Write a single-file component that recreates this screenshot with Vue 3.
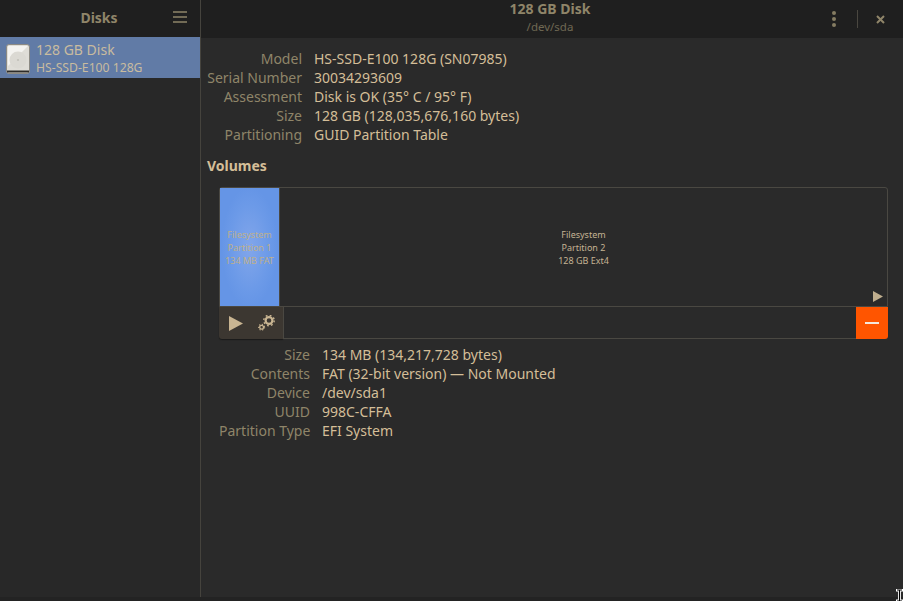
<script setup>
const diskRows = [
  ['Model', 'HS-SSD-E100 128G (SN07985)'],
  ['Serial Number', '30034293609'],
  ['Assessment', 'Disk is OK (35° C / 95° F)'],
  ['Size', '128 GB (128,035,676,160 bytes)'],
  ['Partitioning', 'GUID Partition Table'],
]
const volRows = [
  ['Size', '134 MB (134,217,728 bytes)'],
  ['Contents', 'FAT (32-bit version) — Not Mounted'],
  ['Device', '/dev/sda1'],
  ['UUID', '998C-CFFA'],
  ['Partition Type', 'EFI System'],
]
</script>

<template>
  <div class="win">
    <aside class="side">
      <header class="side-head">
        <span class="side-title">Disks</span>
        <svg class="menu" width="14" height="12" viewBox="0 0 14 12">
          <path d="M0 1h14M0 6h14M0 11h14" stroke="#8f8569" stroke-width="1.4" />
        </svg>
      </header>
      <div class="disk-row">
        <svg class="disk-icon" width="24" height="30" viewBox="0 0 24 30">
          <rect x="0.5" y="0.5" width="23" height="29" rx="2.5" fill="#dfddd7" stroke="#8c8a84" />
          <path d="M2 2h20L2 22z" fill="#f4f3f0" />
          <circle cx="12" cy="16" r="8.5" fill="#dbd9d3" />
          <circle cx="12" cy="16" r="1.1" fill="#c2c0b9" />
          <rect x="1" y="26.5" width="22" height="2" fill="#2d2c2a" />
        </svg>
        <div class="disk-text">
          <div class="disk-name">128 GB Disk</div>
          <div class="disk-sub">HS-SSD-E100 128G</div>
        </div>
      </div>
    </aside>
    <main class="main">
      <header class="main-head">
        <div class="titles">
          <div class="title">128 GB Disk</div>
          <div class="subtitle">/dev/sda</div>
        </div>
        <div class="head-actions">
          <svg width="6" height="18" viewBox="0 0 6 18" class="dots">
            <circle cx="3" cy="3" r="2" fill="#857c62" />
            <circle cx="3" cy="9" r="2" fill="#857c62" />
            <circle cx="3" cy="15" r="2" fill="#857c62" />
          </svg>
          <span class="sep"></span>
          <svg width="9" height="9" viewBox="0 0 9 9" class="close">
            <path d="M1 1l7 7M8 1l-7 7" stroke="#8f8569" stroke-width="2" />
          </svg>
        </div>
      </header>
      <div class="content">
        <div class="info disk-info">
          <template v-for="r in diskRows" :key="r[0]">
            <span class="k">{{ r[0] }}</span>
            <span class="v">{{ r[1] }}</span>
          </template>
        </div>
        <h2 class="vol-heading">Volumes</h2>
        <section class="volumes">
          <div class="bar">
            <div class="part part-one">
              <span>Filesystem</span>
              <span>Partition 1</span>
              <span>134 MB FAT</span>
            </div>
            <div class="part part-two">
              <span>Filesystem</span>
              <span>Partition 2</span>
              <span>128 GB Ext4</span>
              <svg class="more" width="10" height="11" viewBox="0 0 10 11">
                <path d="M0 0l10 5.5L0 11z" fill="#bfae8e" />
              </svg>
            </div>
          </div>
          <div class="tools">
            <div class="tool-group">
              <svg width="14" height="15" viewBox="0 0 14 15">
                <path d="M0 0l14 7.5L0 15z" fill="#c9b592" />
              </svg>
              <svg width="17" height="16" viewBox="0 0 17 16">
                <g fill="none" stroke="#c9b592">
                  <circle cx="11" cy="5.5" r="3.4" stroke-width="2.2" />
                  <circle cx="11" cy="5.5" r="5.2" stroke-width="1.4" stroke-dasharray="1.8 2.3" />
                  <circle cx="3.6" cy="12.2" r="1.9" stroke-width="1.3" />
                  <circle cx="3.6" cy="12.2" r="3" stroke-width="1.1" stroke-dasharray="1.2 1.6" />
                </g>
              </svg>
            </div>
            <div class="tool-fill"></div>
            <div class="tool-del"><span class="minus"></span></div>
          </div>
        </section>
        <div class="info vol-info">
          <template v-for="r in volRows" :key="r[0]">
            <span class="k">{{ r[0] }}</span>
            <span class="v">{{ r[1] }}</span>
          </template>
        </div>
      </div>
    </main>
    <div class="bottom-edge"></div>
    <svg class="cursor" width="7" height="13" viewBox="0 0 7 13">
      <path d="M0 1h7M3.5 1v11M0 12h7" stroke="#fff" stroke-width="3" fill="none" />
      <path d="M1 1h5M3.5 1v11M1 12h5" stroke="#000" stroke-width="1.2" fill="none" />
    </svg>
  </div>
</template>

<style>
html, body { margin: 0; background: #2a2a2a; }
</style>

<style scoped>
.win {
  position: relative;
  width: 903px;
  height: 601px;
  display: flex;
  overflow: hidden;
  background: #2a2a2a;
  font-family: "Noto Sans", sans-serif;
  font-size: 14px;
  color: #d4be98;
}
.side {
  width: 200px;
  flex: none;
  border-right: 1px solid #45433d;
  background: #282828;
}
.side-head {
  height: 37px;
  background: #1f1f1f;
  display: flex;
  align-items: center;
  justify-content: center;
  position: relative;
}
.side-title {
  font-weight: 700;
  font-size: 14px;
  color: #8f8569;
  margin: -3px 2px 0 0;
}
.menu { position: absolute; left: 173px; top: 11px; }
.disk-row {
  height: 41px;
  background: #617ba6;
  display: flex;
  align-items: center;
  gap: 6px;
  padding-left: 6px;
}
.disk-icon { margin-top: 2px; }
.disk-text { line-height: 1; color: #c9bc9f; }
.disk-name { font-size: 14px; line-height: 19px; }
.disk-sub { font-size: 12.2px; line-height: 17px; }
.main { flex: 1; min-width: 0; }
.main-head {
  height: 38px;
  background: #1f1f1f;
  position: relative;
  display: flex;
  justify-content: center;
}
.titles { text-align: center; margin-right: 4px; }
.title { font-weight: 700; font-size: 14px; line-height: 18px; color: #8f8569; }
.subtitle { font-size: 11.5px; line-height: 17px; color: #6f6853; }
.head-actions {
  position: absolute;
  right: 0;
  top: 0;
  height: 38px;
  display: flex;
  align-items: center;
}
.dots { margin-right: 20px; }
.sep { width: 1px; height: 18px; background: #4a4740; margin-right: 18px; }
.close { margin-right: 18px; }
.content { padding: 11px 15px 0 6px; }
.info {
  display: grid;
  grid-auto-rows: 19px;
  column-gap: 12px;
  line-height: 19px;
}
.disk-info { grid-template-columns: 95px auto; }
.vol-info { grid-template-columns: 91px auto; margin: 6px 0 0 12px; }
.k { text-align: right; color: #8f8569; white-space: nowrap; }
.v { color: #d4be98; white-space: nowrap; }
.vol-heading {
  margin: 12px 0 12px;
  font-size: 14px;
  line-height: 19px;
  font-weight: 700;
  color: #d4be98;
}
.volumes { margin-left: 12px; width: 669px; }
.bar {
  height: 120px;
  display: flex;
  border: 1px solid #4a4842;
  border-radius: 3px 3px 0 0;
  box-sizing: border-box;
}
.part {
  display: flex;
  flex-direction: column;
  align-items: center;
  justify-content: center;
  font-size: 9px;
  line-height: 13px;
  padding-top: 1px;
  box-sizing: border-box;
}
.part-one {
  width: 60px;
  flex: none;
  color: #bfb08a;
  background: radial-gradient(ellipse 28px 60px at 50% 50%, #82a6ea 0, #6c9ae8 70%, #6595e6 100%);
  border-right: 1px solid #4a4842;
}
.part-two {
  flex: 1;
  position: relative;
  color: #c4b393;
}
.more { position: absolute; right: 4px; bottom: 4px; }
.tools { display: flex; height: 32px; }
.tool-group {
  width: 64px;
  flex: none;
  box-sizing: border-box;
  background: #3c3731;
  display: flex;
  align-items: center;
  gap: 15px;
  padding-left: 10px;
  border-radius: 0 0 0 3px;
  box-shadow: 0 1px 1px #1a1a1a;
}
.tool-fill {
  flex: 1;
  border: 1px solid #4a4842;
  border-top: none;
  border-right: none;
}
.tool-del {
  width: 32px;
  flex: none;
  background: #ff5500;
  display: flex;
  align-items: center;
  justify-content: center;
  border-radius: 0 0 3px 0;
}
.minus { width: 14px; height: 2px; background: #f5e8dc; }
.bottom-edge { position: absolute; left: 0; right: 0; bottom: 0; height: 4px; background: #232323; }
.cursor { position: absolute; left: 896px; top: 589px; }
</style>
